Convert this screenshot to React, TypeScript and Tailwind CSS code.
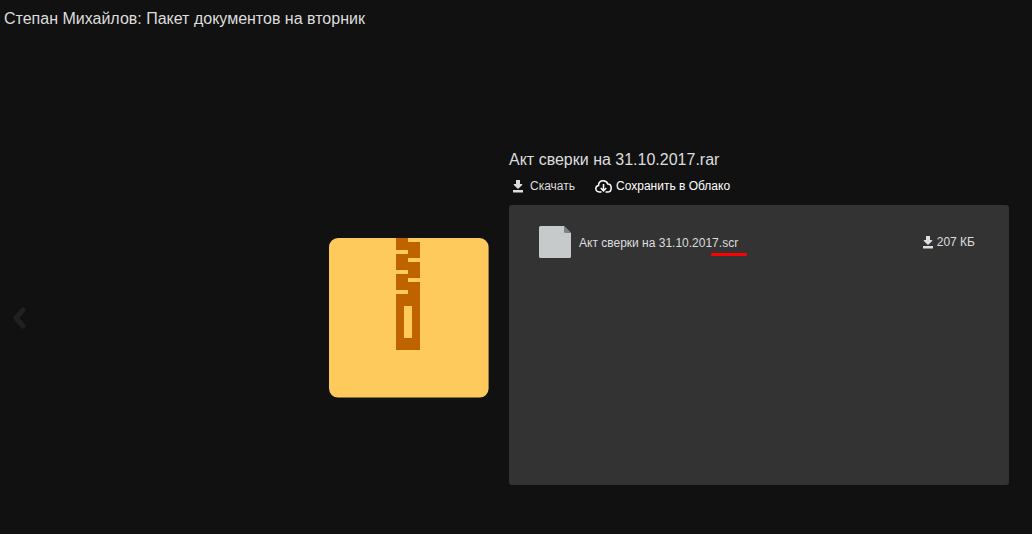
const files = [{ name: "Акт сверки на 31.10.2017", ext: ".scr", size: "207 КБ" }]

function DownloadIcon() {
  return (
    <svg width="10" height="13" viewBox="0 0 10 13" fill="currentColor" aria-hidden="true">
      <path d="M3 0h4v4h2.200v1L5 9 .8 5V4H3z" />
      <path d="M0 10h10v2.500H0z" />
    </svg>
  )
}

function CloudIcon() {
  return (
    <svg
      width="17"
      height="13"
      viewBox="0 0 17 13"
      fill="none"
      stroke="currentColor"
      strokeWidth="1.500"
      aria-hidden="true"
    >
      <path d="M6.500 12H4.200C2.200 12 .8 10.600 .8 8.800c0-1.700 1.200-2.900 2.700-3.200C3.600 2.800 5.500.8 8.200.8c2.200 0 3.900 1.200 4.600 3.200 2.100.1 3.400 1.800 3.400 3.900 0 2.300-1.500 4.100-3.700 4.100h-2" />
      <path d="M8.500 4v7M5.800 8l2.700 3 2.700-3" />
    </svg>
  )
}

function ArchiveIcon() {
  return (
    <svg className="shrink-0" width="160" height="160" viewBox="0 0 160 160" role="img" aria-label="Архив">
      <rect width="159.600" height="159.600" rx="9" fill="#ffca5c" />
      <path
        fill="#bf6300"
        d="M67 0h12v4h12v16H79v4h12v16H79v4h12v68H67V56h12v-4H67V36h12v-4H67V16h12v-4H67z"
      />
      <path fill="#ffca5c" d="M75 68h8v32h-8z" />
    </svg>
  )
}

function FileIcon() {
  return (
    <svg className="shrink-0" width="32" height="32" viewBox="0 0 32 32" aria-hidden="true">
      <path fill="#c6cacb" d="M1.500 0H25l7 7v23.500a1.500 1.500 0 0 1-1.500 1.500h-29A1.500 1.500 0 0 1 0 30.500v-29A1.500 1.500 0 0 1 1.500 0z" />
      <path fill="#7d8182" d="M25 0l7 7h-5.500A1.500 1.500 0 0 1 25 5.500z" />
    </svg>
  )
}

export default function App() {
  return (
    <div className="flex min-h-screen flex-col bg-[#111] font-['Liberation_Sans',Arial,sans-serif] text-[#ddd]">
      <header className="px-1 pt-[7px] pb-[5px]">
        <h1 className="text-base leading-6">Степан Михайлов: Пакет документов на вторник</h1>
      </header>

      <main className="flex flex-1 items-center justify-between pt-[66px] pr-[23px] pl-[13px]">
        <button type="button" aria-label="Назад" className="text-[#202020]">
          <svg width="14" height="24" viewBox="0 0 14 24" fill="none" stroke="currentColor" strokeWidth="5" strokeLinecap="round" strokeLinejoin="round">
            <path d="M10 4L3 12l7 8" />
          </svg>
        </button>

        <div className="flex items-center gap-5">
          <ArchiveIcon />

          <section className="w-[500px] pb-px">
            <h2 className="text-base leading-5">Акт сверки на 31.10.2017.rar</h2>
            <div className="mt-2 flex gap-5 text-xs leading-4">
              <button type="button" className="flex items-center gap-[7px] pl-1">
                <DownloadIcon />
                Скачать
              </button>
              <button type="button" className="flex items-center gap-1 text-white">
                <CloudIcon />
                Сохранить в Облако
              </button>
            </div>

            {/* Archive contents */}
            <ul className="mt-[11px] min-h-[280px] rounded-[3px] bg-[#333] py-[21px] pr-[34px] pl-[30px] text-xs">
              {files.map((file) => (
                <li key={file.name} className="flex items-center gap-2">
                  <FileIcon />
                  <span className="flex-1 pt-0.5">
                    {file.name}
                    <span className="relative inline-block">
                      {file.ext}
                      <span className="absolute top-[18px] -left-2 h-[3px] w-9 rounded-[1px] bg-[#f00]" />
                    </span>
                  </span>
                  <button type="button" className="flex items-center gap-1">
                    <DownloadIcon />
                    {file.size}
                  </button>
                </li>
              ))}
            </ul>
          </section>
        </div>
      </main>
    </div>
  )
}
